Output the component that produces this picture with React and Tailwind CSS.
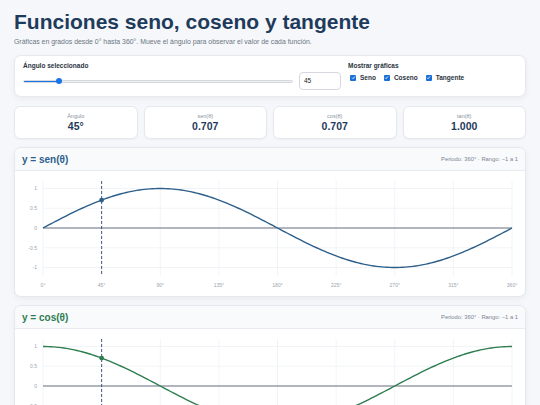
import React, { useState } from 'react';

const X0 = 28;
const PW = 469;
const px = (d) => X0 + (PW * d) / 360;
const py = (v) => 57 - 39.5 * v;

function buildPath(fn) {
  let d = '';
  for (let a = 0; a <= 360; a += 2) {
    const v = fn((a * Math.PI) / 180);
    d += `${a === 0 ? 'M' : 'L'}${px(a).toFixed(2)},${py(v).toFixed(2)} `;
  }
  return d;
}

function Chart({ fn, color, angle }) {
  const ticksX = [0, 45, 90, 135, 180, 225, 270, 315, 360];
  const ticksY = [1, 0.5, 0, -0.5, -1];
  const val = fn((angle * Math.PI) / 180);
  return (
    <svg width="510" height="125" viewBox="0 0 510 125" className="block">
      {ticksX.map((t) => (
        <line key={t} x1={px(t)} x2={px(t)} y1="10" y2="105" stroke="#eef1f5" strokeWidth="0.8" />
      ))}
      {ticksY.map((t) => (
        <line key={t} x1={X0} x2={X0 + PW} y1={py(t)} y2={py(t)} stroke="#eef1f5" strokeWidth="0.8" />
      ))}
      <line x1={X0} x2={X0 + PW} y1={py(0)} y2={py(0)} stroke="#6b7280" strokeWidth="1" />
      {ticksY.map((t) => (
        <text key={t} x={X0 - 6} y={py(t) + 1.8} textAnchor="end" fontSize="5" fill="#9aa3ae" fontFamily="Liberation Sans, sans-serif">
          {t}
        </text>
      ))}
      {ticksX.map((t) => (
        <text key={t} x={px(t)} y="116" textAnchor="middle" fontSize="5" fill="#9aa3ae" fontFamily="Liberation Sans, sans-serif">
          {t}°
        </text>
      ))}
      <path d={buildPath(fn)} fill="none" stroke={color} strokeWidth="1.4" />
      <line x1={px(angle)} x2={px(angle)} y1="10" y2="105" stroke="#2c4a6e" strokeWidth="0.9" strokeDasharray="3 2" />
      <circle cx={px(angle)} cy={py(val)} r="2.4" fill={color} />
    </svg>
  );
}

function Check({ label }) {
  return (
    <label className="flex items-center gap-[4px]">
      <span className="flex h-[6px] w-[6px] items-center justify-center rounded-[1px] bg-[#1a6fd6]">
        <svg width="5" height="5" viewBox="0 0 10 10">
          <path d="M2 5.2 L4.2 7.4 L8 2.8" fill="none" stroke="#fff" strokeWidth="1.6" />
        </svg>
      </span>
      <span className="text-[6.5px] font-bold text-[#2b3440]">{label}</span>
    </label>
  );
}

function Stat({ label, value }) {
  return (
    <div className="flex h-[33px] flex-1 flex-col items-center justify-center rounded-[6px] border border-[#e5e9ef] bg-white shadow-[0_1px_2px_rgba(0,0,0,0.04)]">
      <span className="text-[5.5px] leading-[7px] text-[#8a94a0]">{label}</span>
      <span className="text-[10.5px] font-bold leading-[13px] text-[#1f3b5c]">{value}</span>
    </div>
  );
}

function ChartCard({ title, color, fn, angle }) {
  return (
    <div className="overflow-hidden rounded-[7px] border border-[#e3e8ee] bg-white shadow-[0_2px_6px_rgba(0,0,0,0.05)]">
      <div className="flex h-[23px] items-center justify-between border-b border-[#e8ecf1] bg-[#f8fafc] px-[7px]">
        <span className="text-[10px] font-bold" style={{ color }}>{title}</span>
        <span className="text-[5.8px] text-[#7b8591]">Periodo: 360° · Rango: −1 a 1</span>
      </div>
      <Chart fn={fn} color={color} angle={angle} />
    </div>
  );
}

export default function App() {
  const [angle] = useState(45);
  const rad = (angle * Math.PI) / 180;

  return (
    <div className="min-h-screen bg-[#f5f7fa] px-[14px] pt-[8px] pb-[10px] font-['Liberation_Sans',Arial,sans-serif]">
      <h1 className="text-[21px] font-bold leading-[28px] text-[#1f3b5c]">Funciones seno, coseno y tangente</h1>
      <p className="mt-[1px] text-[6.9px] leading-[9px] text-[#6b7682]">
        Gráficas en grados desde 0° hasta 360°. Mueve el ángulo para observar el valor de cada función.
      </p>

      <div className="mt-[9px] flex h-[42px] rounded-[7px] border border-[#e5e9ef] bg-white px-[8px] pt-[6px] shadow-[0_2px_6px_rgba(0,0,0,0.05)]">
        <div className="flex w-[318px] flex-col">
          <span className="text-[6.5px] font-bold leading-[8px] text-[#2b3440]">Ángulo seleccionado</span>
          <div className="mt-[2px] flex items-center gap-[6px]">
            <div className="relative h-[3px] flex-1 rounded-full border border-[#d6d9de] bg-[#eceef1]">
              <div className="h-full w-[35px] rounded-full bg-[#1a73e8]" />
              <div className="absolute top-1/2 left-[32px] h-[6px] w-[6px] -translate-y-1/2 rounded-full bg-[#1a73e8]" />
            </div>
            <div className="flex h-[18px] w-[42px] items-center rounded-[4px] border border-[#d4d8de] px-[4px] text-[6.5px] text-[#222]">
              45
            </div>
          </div>
        </div>
        <div className="ml-[7px] flex flex-col">
          <span className="text-[6.5px] font-bold leading-[8px] text-[#2b3440]">Mostrar gráficas</span>
          <div className="mt-[3px] flex items-center gap-[8px] pl-[2px]">
            <Check label="Seno" />
            <Check label="Coseno" />
            <Check label="Tangente" />
          </div>
        </div>
      </div>

      <div className="mt-[9px] flex gap-[6px]">
        <Stat label="Ángulo" value={`${angle}°`} />
        <Stat label="sen(θ)" value={Math.sin(rad).toFixed(3)} />
        <Stat label="cos(θ)" value={Math.cos(rad).toFixed(3)} />
        <Stat label="tan(θ)" value={Math.tan(rad).toFixed(3)} />
      </div>

      <div className="mt-[8px] flex flex-col gap-[8px]">
        <ChartCard title="y = sen(θ)" color="#2d5f8a" fn={Math.sin} angle={angle} />
        <ChartCard title="y = cos(θ)" color="#2e7d50" fn={Math.cos} angle={angle} />
      </div>
    </div>
  );
}
